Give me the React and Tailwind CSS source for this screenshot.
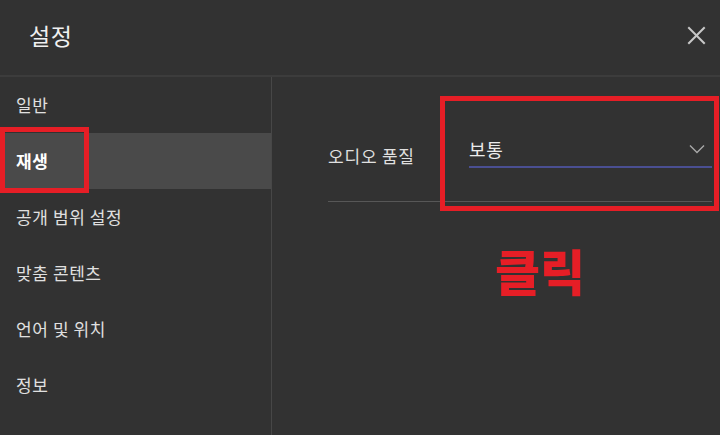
import { useState } from 'react';

const menu = ['일반', '재생', '공개 범위 설정', '맞춤 콘텐츠', '언어 및 위치', '정보'];

function CloseIcon() {
    return (
        <svg width="19" height="19" viewBox="0 0 19 19" fill="none" stroke="#c8c8c8" strokeWidth="2" strokeLinecap="square">
            <line x1="2" y1="2" x2="17" y2="17" />
            <line x1="17" y1="2" x2="2" y2="17" />
        </svg>
    );
}

function Chevron() {
    return (
        <svg width="16" height="10" viewBox="0 0 16 10" fill="none" stroke="#a8a8a8" strokeWidth="1.4">
            <polyline points="1,1.5 8,8.5 15,1.5" />
        </svg>
    );
}

export default function App() {
    const [active, setActive] = useState(1);

    return (
        <div
            className="relative w-[720px] h-[435px] overflow-hidden bg-[#323232] text-[#e2e2e2]"
            style={{ fontFamily: '"Noto Sans CJK KR", "Noto Sans", sans-serif' }}
        >
            <div className="flex items-center justify-between h-[77px] border-b-2 border-[#3c3c3c] pl-[29px] pr-[14px]">
                <h1 className="text-[23px] font-normal tracking-[0.5px] text-[#f0f0f0] -mt-[4px]">설정</h1>
                <button className="w-[19px] h-[19px] -mt-[4px]">
                    <CloseIcon />
                </button>
            </div>

            <div className="flex h-[358px]">
                <ul className="w-[272px] border-r border-[#474747] shrink-0">
                    {menu.map((item, i) => (
                        <li
                            key={item}
                            onClick={() => setActive(i)}
                            className={
                                'flex items-center h-[56px] pl-4 text-[17px] tracking-[0.6px] ' +
                                (i === active ? 'bg-[#4a4a4a] font-bold text-white' : 'text-[#e0e0e0]')
                            }
                        >
                            {item}
                        </li>
                    ))}
                </ul>

                <div className="flex-1 pl-[56px] pr-2">
                    <div className="flex border-b border-[#575757] pb-[33px]">
                        <div className="w-[141px] pt-[67px] text-[17px] tracking-[0.8px] leading-[24px] text-[#e0e0e0]">오디오 품질</div>
                        <div className="w-[243px] pt-[60px]">
                            <div className="flex items-center justify-between border-b-2 border-[#4a4f92] pb-[5px] pr-[7px]">
                                <span className="text-[18px] tracking-[0.8px] leading-[24px] text-[#ececec]">보통</span>
                                <Chevron />
                            </div>
                        </div>
                    </div>
                </div>
            </div>

            <div className="absolute left-0 top-[127px] w-[89px] h-[66px] border-[5px] border-[#e61e26]" />
            <div className="absolute left-[440px] top-[96px] w-[279px] h-[115px] border-[5px] border-[#e61e26]" />
            <div className="absolute left-[495px] top-[245px] text-[49px] leading-none font-black text-[#e61e26]">클릭</div>
        </div>
    );
}
